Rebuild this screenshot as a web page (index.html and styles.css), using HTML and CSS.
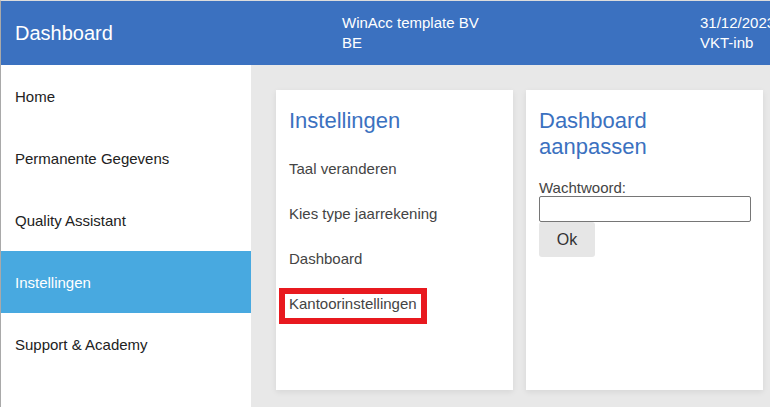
FILE: index.html
```html
<!DOCTYPE html>
<html lang="nl">

<head>
    <meta charset="UTF-8">
    <meta name="viewport" content="width=device-width, initial-scale=1.0">
    <title>Dashboard</title>
    <link rel="stylesheet" href="styles.css">
</head>

<body>
    <header class="topbar">
        <div class="topbar-title">Dashboard</div>
        <div class="topbar-info">
            <span>WinAcc template BV</span>
            <span>BE</span>
        </div>
        <div class="topbar-info topbar-right">
            <span>31/12/2023</span>
            <span>VKT-inb</span>
        </div>
    </header>

    <div class="layout">
        <nav class="sidebar">
            <a class="nav-item">Home</a>
            <a class="nav-item">Permanente Gegevens</a>
            <a class="nav-item">Quality Assistant</a>
            <a class="nav-item active">Instellingen</a>
            <a class="nav-item">Support &amp; Academy</a>
        </nav>

        <main class="content">
            <section class="card">
                <h2 class="card-title">Instellingen</h2>
                <ul class="settings-list">
                    <li>Taal veranderen</li>
                    <li>Kies type jaarrekening</li>
                    <li>Dashboard</li>
                    <li class="marked">Kantoorinstellingen</li>
                </ul>
            </section>

            <section class="card">
                <h2 class="card-title">Dashboard<br>aanpassen</h2>
                <form class="form">
                    <label for="wachtwoord">Wachtwoord:</label>
                    <input type="password" id="wachtwoord" class="field">
                    <button type="button" class="btn">Ok</button>
                </form>
            </section>
        </main>
    </div>
</body>

</html>
```

FILE: styles.css
```css
/* Reset */
*,
*::before,
*::after {
    margin: 0;
    padding: 0;
    box-sizing: border-box;
}

html,
body {
    height: 100%;
}

body {
    font-family: 'Liberation Sans', Arial, sans-serif;
    font-size: 15px;
    color: #222;
    border-top: 1px solid #dcdcdc;
    border-left: 1px solid #a9a9a9;
    display: flex;
    flex-direction: column;
    overflow: hidden;
}

/* Top bar */
.topbar {
    display: flex;
    align-items: center;
    height: 64px;
    width: 1000px;
    flex-shrink: 0;
    padding-left: 14px;
    background-color: #3b71c0;
    color: white;
}

.topbar-title {
    width: 327px;
    font-size: 20px;
}

.topbar-info {
    display: flex;
    flex-direction: column;
    width: 358px;
    line-height: 20px;
}

.topbar-right {
    width: auto;
}

/* Layout */
.layout {
    flex: 1;
    display: flex;
    min-height: 0;
}

.sidebar {
    width: 250px;
    flex-shrink: 0;
    background: white;
}

.nav-item {
    display: flex;
    align-items: center;
    height: 62px;
    padding-left: 14px;
    color: #222;
    text-decoration: none;
}

.nav-item.active {
    background-color: #48a9e0;
    color: white;
}

.content {
    flex: 1;
    display: flex;
    align-items: flex-start;
    gap: 13px;
    padding: 25px 0 0 25px;
    background-color: #e8e8e8;
}

.card {
    width: 237px;
    height: 300px;
    flex-shrink: 0;
    padding: 18px 13px 0;
    background: white;
    box-shadow: 0 2px 6px rgba(0, 0, 0, 0.08);
}

.card-title {
    font-size: 22px;
    font-weight: normal;
    line-height: 26px;
    color: #3b71c0;
}

.settings-list {
    list-style: none;
    margin-top: 12px;
    color: #444;
}

.settings-list li {
    line-height: 45px;
}

/* red annotation frame */
.marked {
    position: relative;
}

.marked::after {
    content: "";
    position: absolute;
    left: -10px;
    top: 7px;
    width: 148px;
    height: 36px;
    border: 6px solid #e8191f;
}

.form {
    display: flex;
    flex-direction: column;
    align-items: flex-start;
    margin-top: 19px;
    color: #444;
}

.form label {
    line-height: 17px;
}

.field {
    width: 212px;
    height: 26px;
    border: 1px solid #767676;
    border-radius: 2px;
    padding: 0 4px;
    font-family: inherit;
}

.btn {
    width: 56px;
    height: 35px;
    border: none;
    border-radius: 3px;
    background-color: #e6e6e6;
    color: #333;
    font-family: inherit;
    font-size: 16px;
    cursor: pointer;
}
```
